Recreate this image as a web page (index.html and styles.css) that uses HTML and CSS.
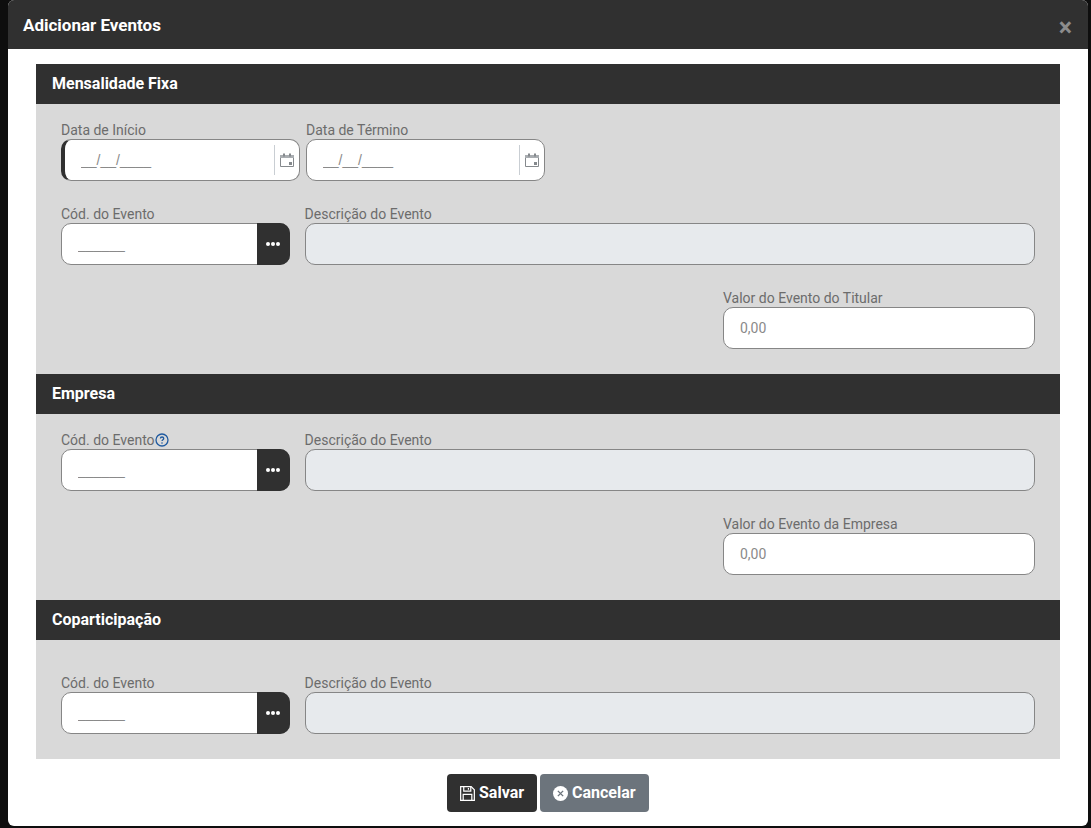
FILE: index.html
```html
<!DOCTYPE html>
<html lang="pt-BR">
<head>
<meta charset="utf-8">
<title>Adicionar Eventos</title>
<link rel="stylesheet" href="styles.css">
</head>
<body>
<div class="modal">
  <header class="modal-header">
    <h1 class="modal-title">Adicionar Eventos</h1>
    <span class="close">×</span>
  </header>
  <main class="modal-body">
    <section class="section">
      <h2 class="section-title">Mensalidade Fixa</h2>
      <div class="section-body">
        <div class="row row-dates">
          <div class="field w-date">
            <label class="label">Data de Início</label>
            <div class="box date-box focus-bar">
              <input class="input mask" placeholder="__/__/____">
              <span class="cal"><svg viewBox="0 0 14 14" width="14" height="14"><path d="M.5 2.5h13v11H.5z" fill="none" stroke="#85898d"/><path d="M0 2h14v3H0z" fill="#a9adb1"/><path d="M3 .5h2v3H3zM9 .5h2v3H9z" fill="#85898d"/><rect x="9" y="9" width="3" height="3" fill="#85898d"/></svg></span>
            </div>
          </div>
          <div class="field w-date">
            <label class="label">Data de Término</label>
            <div class="box date-box">
              <input class="input mask" placeholder="__/__/____">
              <span class="cal"><svg viewBox="0 0 14 14" width="14" height="14"><path d="M.5 2.5h13v11H.5z" fill="none" stroke="#85898d"/><path d="M0 2h14v3H0z" fill="#a9adb1"/><path d="M3 .5h2v3H3zM9 .5h2v3H9z" fill="#85898d"/><rect x="9" y="9" width="3" height="3" fill="#85898d"/></svg></span>
            </div>
          </div>
        </div>
        <div class="row">
          <div class="field w-code">
            <label class="label">Cód. do Evento</label>
            <div class="box code-box">
              <input class="input mask" placeholder="______">
              <button class="dots"><i></i><i></i><i></i></button>
            </div>
          </div>
          <div class="field grow">
            <label class="label">Descrição do Evento</label>
            <div class="box disabled"></div>
          </div>
        </div>
        <div class="row row-end">
          <div class="field w-value">
            <label class="label">Valor do Evento do Titular</label>
            <div class="box"><input class="input" placeholder="0,00"></div>
          </div>
        </div>
      </div>
    </section>
    <section class="section">
      <h2 class="section-title">Empresa</h2>
      <div class="section-body">
        <div class="row">
          <div class="field w-code">
            <label class="label">Cód. do Evento<svg class="help" viewBox="0 0 14 14" width="14" height="14"><circle cx="7" cy="7" r="6" fill="none" stroke="#1f5aa0" stroke-width="1.3"/><path d="M5.4 5.6c0-2.1 3.3-2.1 3.3-.1 0 1.2-1.7 1.2-1.7 2.6" fill="none" stroke="#1f5aa0" stroke-width="1.3"/><circle cx="7" cy="10" r=".8" fill="#1f5aa0"/></svg></label>
            <div class="box code-box">
              <input class="input mask" placeholder="______">
              <button class="dots"><i></i><i></i><i></i></button>
            </div>
          </div>
          <div class="field grow">
            <label class="label">Descrição do Evento</label>
            <div class="box disabled"></div>
          </div>
        </div>
        <div class="row row-end">
          <div class="field w-value">
            <label class="label">Valor do Evento da Empresa</label>
            <div class="box"><input class="input" placeholder="0,00"></div>
          </div>
        </div>
      </div>
    </section>
    <section class="section">
      <h2 class="section-title">Coparticipação</h2>
      <div class="section-body section-body-tall">
        <div class="row">
          <div class="field w-code">
            <label class="label">Cód. do Evento</label>
            <div class="box code-box">
              <input class="input mask" placeholder="______">
              <button class="dots"><i></i><i></i><i></i></button>
            </div>
          </div>
          <div class="field grow">
            <label class="label">Descrição do Evento</label>
            <div class="box disabled"></div>
          </div>
        </div>
      </div>
    </section>
  </main>
  <footer class="modal-footer">
    <button class="btn btn-dark"><svg viewBox="0 0 16 16" width="15" height="15"><path d="M.7.7h11.2l3.4 3.4v11.2H.7z" fill="none" stroke="#fff" stroke-width="1.3"/><path d="M4 .7v4.8h7.5V.7M9 2v2M3.4 15.3V9h9.2v6.3" fill="none" stroke="#fff" stroke-width="1.3"/></svg>Salvar</button>
    <button class="btn btn-gray"><svg viewBox="0 0 16 16" width="15" height="15"><circle cx="8" cy="8" r="8" fill="#fff"/><path d="M5.2 5.2l5.6 5.6M10.8 5.2l-5.6 5.6" stroke="#6c747c" stroke-width="1.5"/></svg>Cancelar</button>
  </footer>
</div>
</body>
</html>
```
FILE: styles.css
```css
* { box-sizing: border-box; }
html, body { height: 100%; }
body {
  margin: 0;
  background: #0e0e0e;
  font-family: Roboto, "Liberation Sans", sans-serif;
  overflow: hidden;
}
.modal {
  width: 1080px;
  height: 826px;
  margin-left: 8px;
  background: #fff;
  border-radius: 6px;
  overflow: hidden;
}
.modal-header {
  height: 49px;
  padding: 0 17px 0 15px;
  background: #303030;
  display: flex;
  align-items: center;
  justify-content: space-between;
}
.modal-title {
  margin: 0;
  color: #fff;
  font-size: 17px;
  font-weight: 700;
  line-height: 51px;
  height: 49px;
}
.close {
  color: #8c8c8c;
  font-size: 25px;
  font-weight: 700;
  line-height: 1;
  margin-top: 5px;
  margin-right: -1px;
}
.modal-body { padding: 15px 28px 0; }
.section-title {
  margin: 0;
  height: 40px;
  padding-left: 16px;
  background: #303030;
  color: #fff;
  font-size: 16px;
  font-weight: 700;
  line-height: 40px;
}
.section-body {
  background: #d9d9d9;
  padding: 17px 25px 25px;
  display: flex;
  flex-direction: column;
  gap: 24px;
}
.section-body-tall { padding-top: 34px; }
.row { display: flex; gap: 15px; }
.row-dates { gap: 6px; }
.row-end { justify-content: flex-end; }
.field { display: flex; flex-direction: column; }
.w-date { width: 239px; }
.w-code { width: 228.6px; }
.w-value { width: 312px; }
.grow { flex: 1; }
.label {
  display: flex;
  align-items: center;
  height: 18px;
  color: #6c6c6c;
  font-size: 14px;
  line-height: 18px;
}
.box {
  height: 42px;
  display: flex;
  border: 1px solid #868686;
  border-radius: 10px;
  background: #fff;
}
.focus-bar { border-left: 4px solid #303030; }
.disabled { background: #e7eaed; }
.input {
  flex: 1;
  min-width: 0;
  height: 100%;
  padding: 0 0 0 16px;
  border: 0;
  border-radius: 10px;
  outline: 0;
  background: transparent;
  font-family: inherit;
  font-size: 14px;
  color: #555;
}
.mask { font-family: "Liberation Sans", sans-serif; }
.input::placeholder { color: #8a8a8a; opacity: 1; }
.date-box { align-items: center; }
.cal {
  width: 25px;
  height: 30px;
  border-left: 1px solid #c9ced3;
  display: flex;
  align-items: center;
  justify-content: center;
  flex: none;
}
.dots {
  width: 33px;
  flex: none;
  margin: -1px -1px -1px 0;
  padding: 0 1px 1px 0;
  border: 0;
  border-radius: 0 10px 10px 0;
  background: #303030;
  display: flex;
  align-items: center;
  justify-content: center;
  gap: 1px;
}
.dots i {
  width: 4px;
  height: 4px;
  border-radius: 50%;
  background: #fff;
}
.modal-footer {
  display: flex;
  justify-content: center;
  gap: 3px;
  padding-top: 15px;
}
.btn {
  height: 38px;
  display: flex;
  align-items: center;
  gap: 4px;
  padding: 0 0 2px 13px;
  border: 0;
  border-radius: 4px;
  color: #fff;
  font-family: inherit;
  font-size: 16px;
  font-weight: 700;
}
.btn svg { margin-top: 3px; }
.btn-dark { background: #303030; width: 90px; }
.btn-gray { background: #6c747c; width: 109px; }
```
